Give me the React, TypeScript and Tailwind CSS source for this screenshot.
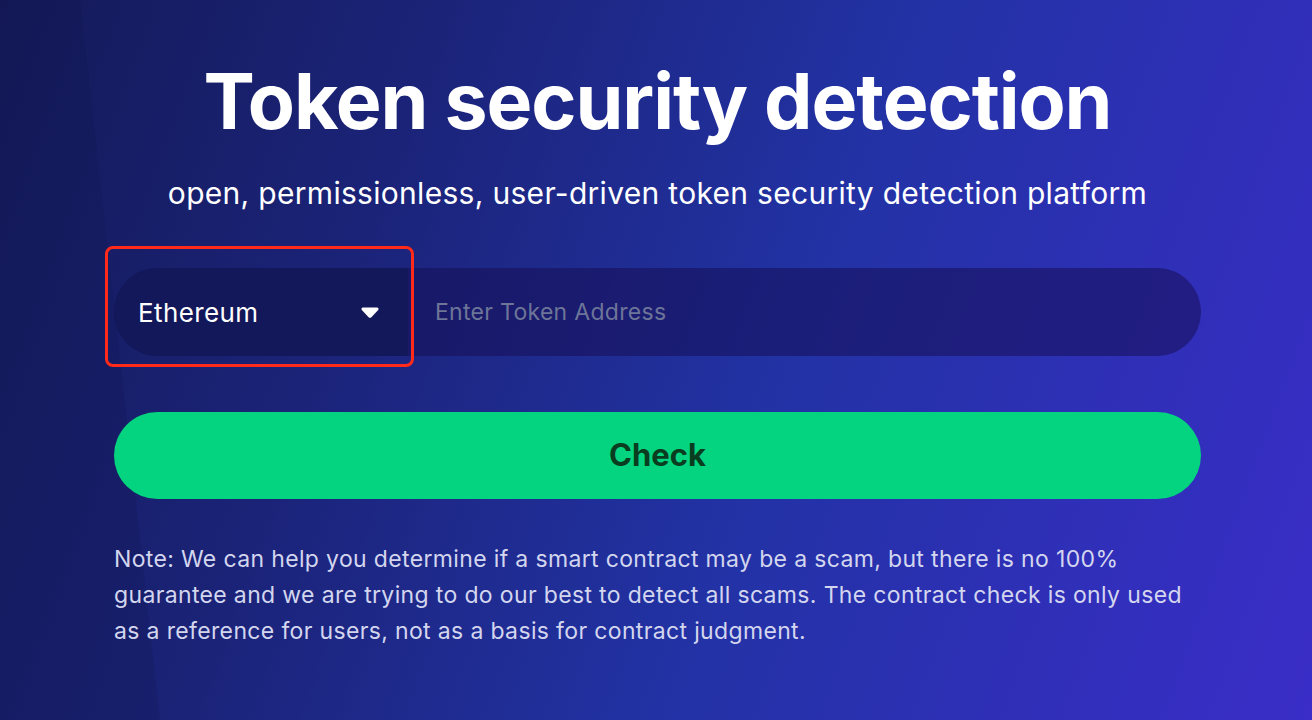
import { useState } from 'react';

export default function App() {
  const [address, setAddress] = useState('');

  return (
    <div
      className="relative min-h-[720px] w-full overflow-hidden bg-[linear-gradient(110deg,#141a58_0%,#1b2378_28%,#2232a4_58%,#3a2dc8_100%)] text-white"
      style={{ fontFamily: 'Inter, "Noto Sans", sans-serif' }}
    >
      {/* faint darker wedge on the left */}
      <div className="pointer-events-none absolute inset-0 bg-[#10154a]/20 [clip-path:polygon(0_0,80px_0,160px_720px,0_720px)]" />

      <div className="relative mx-auto flex w-[1090px] flex-col items-center pl-[3px] pt-[53px]">
        <h1 className="text-[77px] font-bold leading-[96px] tracking-[-1.1px]">Token security detection</h1>
        <p className="mt-[26px] text-[30px] leading-[36px] tracking-[0.3px]">
          open, permissionless, user-driven token security detection platform
        </p>

        {/* chain selector + address input */}
        <div className="relative mt-[57px] flex h-[88px] w-full items-center rounded-full bg-[#150f55]/55">
          <button className="flex h-full w-[294px] items-center justify-between rounded-l-full bg-[#12185a] pl-6 pr-[24px]">
            <span className="text-[26px] tracking-[0.4px]">Ethereum</span>
            <svg width="20" height="14" viewBox="0 0 20 14" className="mr-1">
              <path d="M3 2.5h14c1.3 0 2 1.4 1.2 2.4l-6.8 7.3c-.8.8-2 .8-2.8 0L1.8 4.9C1 3.9 1.7 2.5 3 2.5z" fill="#fff" />
            </svg>
          </button>
          <input
            value={address}
            onChange={(e) => setAddress(e.target.value)}
            placeholder="Enter Token Address"
            className="h-full flex-1 bg-transparent pl-[27px] text-[23px] tracking-[0.3px] text-white outline-none placeholder:text-[#6d7598]"
          />

          {/* highlight annotation */}
          <div className="pointer-events-none absolute left-[-9px] top-[-22px] h-[121px] w-[309px] rounded-[8px] border-[3px] border-[#ff2a1a]" />
        </div>

        <button className="mt-[56px] flex h-[87px] w-full items-center justify-center rounded-full bg-[#04d47f] text-[31px] font-bold text-[#0a3d1f]">
          Check
        </button>

        <p className="mt-[42px] w-full text-[23px] leading-[36px] tracking-[0.35px] text-[#d3d6ee]">
          Note: We can help you determine if a smart contract may be a scam, but there is no 100% guarantee and we are trying to do our best to detect all scams. The contract check is only used as a reference for users, not as a basis for contract judgment.
        </p>
      </div>
    </div>
  );
}
